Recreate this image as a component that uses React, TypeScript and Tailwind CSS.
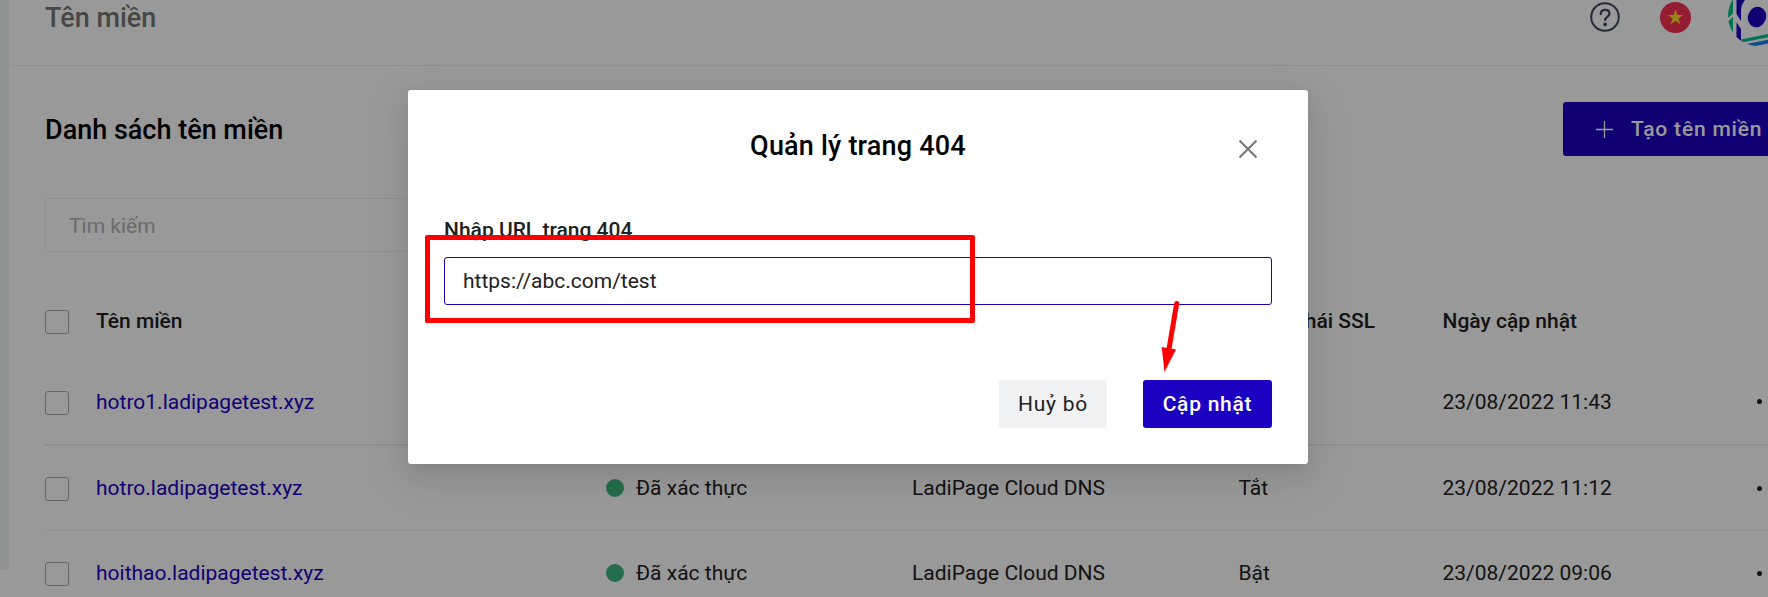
import React from "react";

type Domain = { name: string; status: string; dns: string; ssl: string; updated: string };

const domains: Domain[] = [
  { name: "hotro1.ladipagetest.xyz", status: "", dns: "", ssl: "", updated: "23/08/2022 11:43" },
  { name: "hotro.ladipagetest.xyz", status: "Đã xác thực", dns: "LadiPage Cloud DNS", ssl: "Tắt", updated: "23/08/2022 11:12" },
  { name: "hoithao.ladipagetest.xyz", status: "Đã xác thực", dns: "LadiPage Cloud DNS", ssl: "Bật", updated: "23/08/2022 09:06" },
];

const columns = "grid w-[1800px] shrink-0 grid-cols-[51px_510px_306px_326.5px_204px_314px_60px] items-center";

function Checkbox() {
  return <span className="mt-[2px] block size-6 rounded-[3px] border border-[#aaaaaa] bg-white" />;
}

function HelpIcon() {
  return (
    <svg className="size-[30px] shrink-0" viewBox="0 0 30 30" fill="none" stroke="#404860" strokeWidth="2" strokeLinecap="round">
      <circle cx="15" cy="15" r="13.8" />
      <path d="M10.8 12c0-2.8 1.8-4.2 4.3-4.2s4.3 1.5 4.3 3.9c0 3-4.3 3.2-4.3 6.3" strokeWidth="2.3" />
      <circle cx="15.1" cy="22.4" r="1.9" fill="#404860" stroke="none" />
    </svg>
  );
}

function FlagIcon() {
  return (
    <svg className="size-[31px] shrink-0" viewBox="0 0 31 31">
      <circle cx="15.5" cy="15.5" r="15.5" fill="#f93154" />
      <path d="M15.5 7.300 17.300 13h5.900l-4.700 3.500 1.800 5.800-4.800-3.600-4.800 3.600 1.800-5.800L7.800 13h5.900z" fill="#ffda2c" />
    </svg>
  );
}

function Avatar() {
  return (
    <svg className="size-[60px] shrink-0" viewBox="0 0 60 60">
      <defs>
        <clipPath id="avatar-clip">
          <circle cx="30" cy="30" r="30" />
        </clipPath>
      </defs>
      <g clipPath="url(#avatar-clip)">
        <path d="M0 0h5v27.500L0 32z" fill="#00c08b" />
        <path d="M0 35.500 5 31v17L0 44z" fill="#00c08b" />
        <path d="M8.500 0H24c-1 7-4 10-7 14-3.500 4.500-4 8-4 13v8l-4.500-7z" fill="#1c00c2" />
        <path d="M8.500 36.500 13 43v13l-4.500-4z" fill="#1c00c2" />
        <ellipse cx="29" cy="31" rx="9" ry="10.5" transform="rotate(20 29 31)" fill="#1c00c2" />
        <path d="M13 53.500 60 44v3L14 56.500z" fill="#00c08b" />
        <path d="M16 58.500 60 50v3.500L18 62z" fill="#1580ea" />
      </g>
    </svg>
  );
}

function PageContent() {
  return (
    <div className="flex h-full w-full overflow-hidden bg-white">
      <aside className="h-[570px] w-[9px] shrink-0 bg-[#eff4f2]" />
      <main className="flex min-w-0 flex-1 flex-col overflow-hidden">
        <header className="flex h-[66px] shrink-0 items-start border-b border-[#f1f1f3]">
          <h1 className="mt-[1px] ml-[36px] flex-1 text-[27px] leading-[34px] font-medium text-[#777777]">Tên miền</h1>
          <div className="-mr-[20px] flex items-start">
            <div className="mt-[2px]">
              <HelpIcon />
            </div>
            <div className="mt-[2px] ml-10">
              <FlagIcon />
            </div>
            <div className="-mt-[14px] ml-[37px]">
              <Avatar />
            </div>
          </div>
        </header>
        <section className="flex h-[90px] shrink-0 items-start justify-between pl-9">
          <h2 className="mt-[47px] text-[27px] leading-[34px] font-medium text-black">Danh sách tên miền</h2>
          <button className="-mr-[18px] mt-9 flex h-[54px] w-[223px] shrink-0 items-center rounded-[3px] bg-[#1c00c2] pl-[33px] text-[21px] font-medium tracking-[0.8px] whitespace-nowrap text-white">
            <svg className="mt-px mr-[18px] size-[17px] shrink-0" viewBox="0 0 17 17" fill="none" stroke="white" strokeWidth="1.3">
              <path d="M8.5 0v17M0 8.5h17" />
            </svg>
            <span className="pt-px">Tạo tên miền</span>
          </button>
        </section>
        <div className="mt-[42px] ml-9 flex h-[54px] w-[540px] shrink-0 items-center rounded-[3px] border border-[#f0f0f0] pt-[3px] pl-[23px] text-[21px] text-[#b2b2b2]">
          Tìm kiếm
        </div>
        <div className="ml-9 flex flex-col text-[21px] leading-[30px] text-[#212121]">
          <div className={`${columns} mt-[44px] mb-[13px] h-[50px] font-medium`}>
            <Checkbox />
            <span>Tên miền</span>
            <span />
            <span />
            <span className="whitespace-nowrap">Trạng thái SSL</span>
            <span>Ngày cập nhật</span>
          </div>
          {domains.map((d, i) => (
            <div key={d.name} className={`${columns} border-[#f0f0f0] ${i === 0 ? "h-[87px] border-b-2" : "h-[85px] border-b"}`}>
              <Checkbox />
              <span className="text-[#1c00c2]">{d.name}</span>
              <span className="flex items-center">
                {d.status && <span className="mr-3 size-[18px] rounded-full bg-[#40b681]" />}
                {d.status}
              </span>
              <span>{d.dns}</span>
              <span>{d.ssl}</span>
              <span>{d.updated}</span>
              <span className="flex gap-[9px]">
                <i className="size-[5px] rounded-full bg-[#212121]" />
                <i className="size-[5px] rounded-full bg-[#212121]" />
                <i className="size-[5px] rounded-full bg-[#212121]" />
              </span>
            </div>
          ))}
        </div>
      </main>
    </div>
  );
}

function NotFoundDialog() {
  return (
    <div className="relative flex h-[374px] w-[900px] flex-col rounded-[3px] bg-white px-9 shadow-[0_4.5px_9px_-6px_rgba(0,0,0,0.12),0_9px_24px_0_rgba(0,0,0,0.08),0_13.5px_42px_12px_rgba(0,0,0,0.05)]">
      <div className="grid h-[110px] shrink-0 grid-cols-[1fr_auto_1fr] items-center">
        <span />
        <h3 className="mt-[2px] text-[27px] leading-[36px] font-medium tracking-[0.2px] text-black">Quản lý trang 404</h3>
        <svg className="mt-[7px] mr-[15px] size-[18px] justify-self-end" viewBox="0 0 18 18" fill="none" stroke="#757575" strokeWidth="2">
          <path d="M.5.5l17 17M17.5.5l-17 17" />
        </svg>
      </div>
      <label className="mt-[15px] h-[30px] text-[21px] leading-[30px] font-medium text-[#212121]">Nhập URL trang 404</label>
      <div className="mt-[12px] flex h-12 shrink-0 items-center rounded-[3px] border border-[#1c00c2] pt-[2px] pl-[18px] text-[21px] text-[#212121]">
        https://abc.com/test
      </div>
      <div className="mt-[75px] flex justify-end gap-9 text-[21px]">
        <button className="h-12 w-[108px] rounded-[3px] bg-[#f1f2f4] pt-[2px] tracking-[0.75px] text-[#212121]">Huỷ bỏ</button>
        <button className="h-12 w-[129px] rounded-[3px] bg-[#1c00c2] pt-px font-medium tracking-[0.75px] text-white">Cập nhật</button>
      </div>
      <div className="absolute top-[145px] left-[17px] h-[88px] w-[550px] rounded-[2px] border-[5px] border-[#ff0000]" />
      <svg className="absolute top-[205px] left-[750px] h-[80px] w-[30px]" viewBox="0 0 30 80">
        <path d="M18.7 8.5 11 54" stroke="#ff0000" strokeWidth="5" strokeLinecap="round" />
        <path d="M3.7 52 18 54.5 6.5 77z" fill="#ff0000" />
      </svg>
    </div>
  );
}

export default function App() {
  return (
    <div className="relative h-[597px] w-[1768px] overflow-hidden font-['Roboto',sans-serif]">
      <PageContent />
      <div className="absolute inset-0 flex items-start bg-black/40 pt-[90px] pl-[408px]">
        <NotFoundDialog />
      </div>
    </div>
  );
}
